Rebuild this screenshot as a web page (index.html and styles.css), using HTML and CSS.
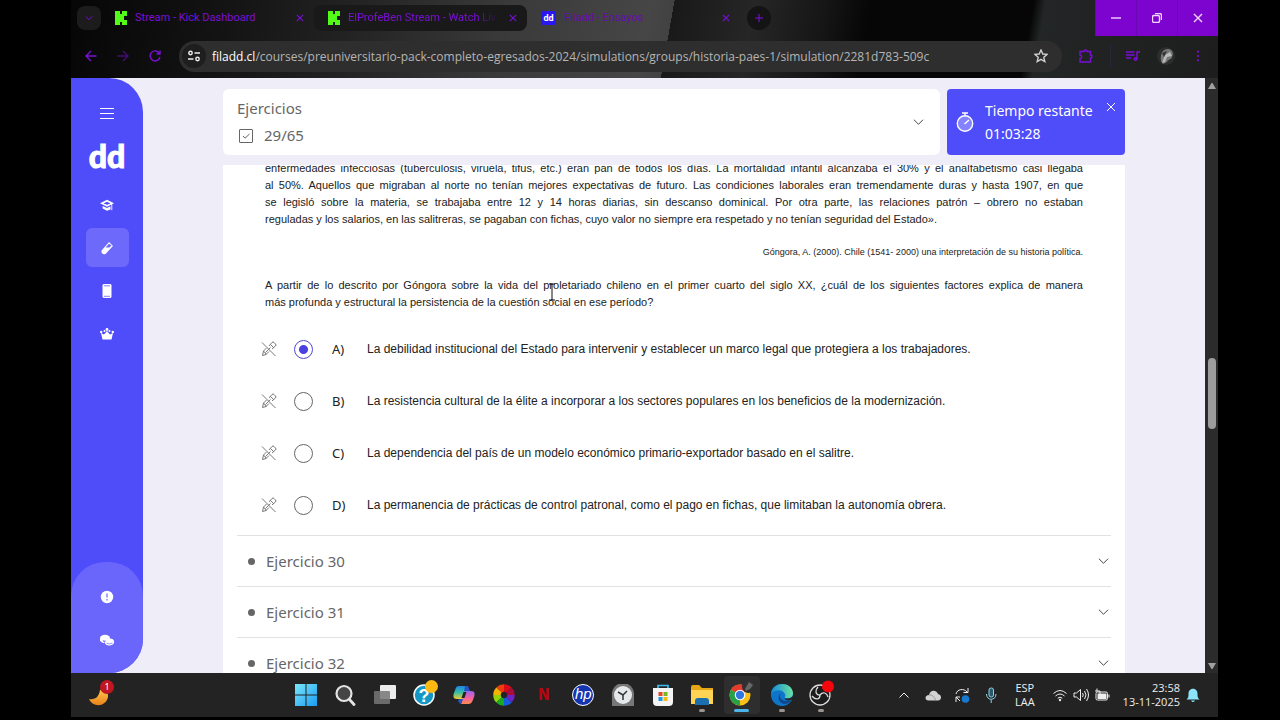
FILE: index.html
```html
<!DOCTYPE html>
<html lang="es">

<head>
    <meta charset="UTF-8">
    <meta name="viewport" content="width=device-width, initial-scale=1.0">
    <title>Filadd - Ensayos</title>
    <link rel="stylesheet" href="styles.css">
</head>

<body>
    <!-- iconos que se repiten -->
    <svg class="sprite" aria-hidden="true">
        <symbol id="i-close" viewBox="0 0 10 10"><path d="M1 1l8 8M9 1l-8 8" /></symbol>
        <symbol id="i-down" viewBox="0 0 12 8"><path d="M1 1.500l5 5 5-5" /></symbol>
        <symbol id="i-kick" viewBox="0 0 12 14">
            <g fill="#53fc18" stroke="none">
                <rect width="5" height="14" />
                <rect x="4" y="3" width="5" height="8" />
                <rect x="7" width="5" height="5" />
                <rect x="7" y="9" width="5" height="5" />
            </g>
        </symbol>
        <symbol id="i-discard" viewBox="0 0 16 16">
            <path d="M1.500 14.500l1-4.500 3-3M5 13.500l3-3M1.500 14.500l3.500-1M2.500 10l3 3.500M8 5l3-3.500q1-1 2 0l1.500 1.500q1 1 0 2L11 8M9.500 3.500l3.500 3.500M4.500 11.500l5-5M1 1.500l13.500 13.500" />
        </symbol>
    </svg>

    <div class="screen">
        <!-- ventana del navegador -->
        <header class="browser">
            <div class="tabs">
                <button class="tab-search" aria-label="Buscar pestañas"><svg class="ico"><use href="#i-down" /></svg></button>
                <div class="tab">
                    <svg class="favicon"><use href="#i-kick" /></svg>
                    <a class="tab-title" href="#">Stream - Kick Dashboard</a>
                    <button class="tab-close" aria-label="Cerrar"><svg class="ico"><use href="#i-close" /></svg></button>
                </div>
                <div class="tab tab-dark">
                    <svg class="favicon"><use href="#i-kick" /></svg>
                    <a class="tab-title fade" href="#">ElProfeBen Stream - Watch Liv</a>
                    <button class="tab-close" aria-label="Cerrar"><svg class="ico"><use href="#i-close" /></svg></button>
                </div>
                <div class="tab">
                    <span class="favicon favicon-dd">dd</span>
                    <a class="tab-title dim" href="#">Filadd - Ensayos</a>
                    <button class="tab-close" aria-label="Cerrar"><svg class="ico"><use href="#i-close" /></svg></button>
                </div>
                <button class="tab-new" aria-label="Nueva pestaña"><svg class="ico" viewBox="0 0 10 10"><path d="M5 0v10M0 5h10" /></svg></button>
                <div class="win-buttons">
                    <button aria-label="Minimizar"><svg viewBox="0 0 10 10"><path d="M0 5h10" /></svg></button>
                    <button aria-label="Restaurar"><svg viewBox="0 0 10 10"><rect x=".5" y="2.500" width="7" height="7" rx="1.500" /><path d="M3 .5h4.500q2 0 2 2V7" /></svg></button>
                    <button aria-label="Cerrar ventana"><svg><use href="#i-close" /></svg></button>
                </div>
            </div>
            <div class="toolbar">
                <button aria-label="Atrás"><svg viewBox="0 0 12 12"><path d="M11.500 6H1M6 1L1 6l5 5" /></svg></button>
                <button class="disabled" aria-label="Adelante"><svg viewBox="0 0 12 12"><path d="M.5 6H11M6 1l5 5-5 5" /></svg></button>
                <button aria-label="Recargar"><svg viewBox="0 0 12 12"><path d="M10.500 3.500a5 5 0 1 0 .5 3.500M11 .5v3.500H7.500" /></svg></button>
                <div class="address">
                    <button class="site-info" aria-label="Información del sitio">
                        <svg viewBox="0 0 12 12"><circle cx="2.500" cy="3" r="1.700" /><path d="M6.500 3H12M0 9h5.500" /><circle cx="9.500" cy="9" r="1.700" /></svg>
                    </button>
                    <span class="url"><b>filadd.cl</b>/courses/preuniversitario-pack-completo-egresados-2024/simulations/groups/historia-paes-1/simulation/2281d783-509c</span>
                    <button class="star" aria-label="Favorito"><svg viewBox="0 0 14 14"><path d="M7 1l1.800 4 4.200.4-3.200 2.900 1 4.200L7 10.300l-3.800 2.200 1-4.200L1 5.400 5.200 5z" /></svg></button>
                </div>
                <button class="ext" aria-label="Extensiones"><svg viewBox="0 0 14 14"><path d="M1 2.500h4a1.500 1.500 0 0 1 3 0h3.500V6a1.500 1.500 0 0 1 0 3v4H1V9.500a1.700 1.700 0 0 0 0-3.400z" /></svg></button>
                <button class="media" aria-label="Multimedia"><svg viewBox="0 0 14 12"><path d="M0 2h8.500M0 5h8.500M0 8h5M11 9V2h3" /><circle cx="9.500" cy="9" r="1.300" /></svg></button>
                <button aria-label="Perfil">
                    <svg class="avatar" viewBox="0 0 18 18"><circle cx="9" cy="9" r="9" fill="#2d2d2d" /><path d="M4 14C3 6 6 2 11 2c4 0 6 4 4 8-1 3-4 2-5 5l-4 2z" fill="#777" /><path d="M8 8l5-3 2 4-5 1-2 5-3 1z" fill="#bbb" /><path d="M5 6l5-2-3 6z" fill="#333" /></svg>
                </button>
                <button class="dots" aria-label="Menú"><svg viewBox="0 0 4 14"><circle cx="2" cy="2" r="1.300" /><circle cx="2" cy="7" r="1.300" /><circle cx="2" cy="12" r="1.300" /></svg></button>
            </div>
        </header>

        <!-- pagina -->
        <div class="page">
            <nav class="sidebar">
                <button class="menu" aria-label="Menú"><svg viewBox="0 0 14 12"><path d="M0 .5h14M0 5.500h14M0 10.500h14" /></svg></button>
                <a class="logo" href="#">dd</a>
                <a class="side-item" href="#" aria-label="Cursos"><svg viewBox="0 0 16 14"><path d="M0 5l8-4 8 4-8 4zM3 8l5 2.500L12 8.500V12l-4 1.500L3 11zM13 6h1v7h-1z" /><path d="M4 5.200l4-2 4 2-4 1.600z" fill="#4f4cfa" /></svg></a>
                <a class="side-item active" href="#" aria-label="Ensayos"><svg viewBox="0 0 14 14"><path d="M9 1l4 4-.8.800L6 12.500c-2.500 2.500-6-1-4-3.500L8.200 2zM9 2.800L5.500 6.500h4l2-2z" fill-rule="evenodd" /></svg></a>
                <a class="side-item" href="#" aria-label="Material"><svg viewBox="0 0 14 14"><path d="M3.500 0h7l1 1v12l-1 1h-7l-1-1V1z" /><path d="M4 1.800h6M4 12.300h6" stroke="#4f4cfa" stroke-width=".7" /></svg></a>
                <a class="side-item" href="#" aria-label="Premium"><svg viewBox="0 0 14 12"><path d="M2.500 11.500L1 5l3 1.500L7 3l3 3.500L13 5l-1.500 6.500z" /><circle cx="1.200" cy="4" r="1.200" /><circle cx="4.500" cy="3" r="1" /><circle cx="7" cy="1.500" r="1.400" /><circle cx="9.500" cy="3" r="1" /><circle cx="12.800" cy="4" r="1.200" /></svg></a>
                <div class="side-bottom">
                    <a class="side-item" href="#" aria-label="Ayuda"><svg viewBox="0 0 14 14"><circle cx="7" cy="7" r="6.200" /><path d="M7 3.500v4M7 9v1.500" stroke="#6a66fc" stroke-width="1.200" /></svg></a>
                    <a class="side-item" href="#" aria-label="Monedas"><svg viewBox="0 0 14 12"><ellipse cx="5" cy="4" rx="5" ry="3.300" /><path d="M0 4v2.500c1 2 3 2.500 5 2.500z" /><ellipse cx="9.500" cy="7.500" rx="4.500" ry="3" /><path d="M5 7.500v2c2 3 8 2.500 9-.5V7.500z" /><path d="M3 6.500q1.500.8 3 .5M6.500 9q3 2 6 0" stroke="#6a66fc" stroke-width=".7" fill="none" /></svg></a>
                </div>
            </nav>

            <main class="content">
                <div class="top">
                    <section class="progress">
                        <div>
                            <h1>Ejercicios</h1>
                            <p class="count"><svg viewBox="0 0 14 14"><rect x=".5" y=".5" width="13" height="13" rx=".5" /><path d="M4 7l2 2.200L10.500 5" /></svg>29/65</p>
                        </div>
                        <button class="toggle" aria-label="Desplegar"><svg class="chevron"><use href="#i-down" /></svg></button>
                    </section>
                    <section class="timer">
                        <svg class="clock" viewBox="0 0 18 20"><circle cx="9" cy="11.500" r="7.700" fill="#8582fd" /><path d="M6 1h6M9 1v2.500M8.500 12L13 8" /></svg>
                        <div class="timer-text">
                            <h2>Tiempo restante</h2>
                            <p>01:03:28</p>
                        </div>
                        <button class="timer-close" aria-label="Cerrar"><svg><use href="#i-close" /></svg></button>
                    </section>
                </div>

                <section class="panel">
                    <article class="exercise">
                        <p class="text">
                            <span>enfermedades infecciosas (tuberculosis, viruela, tifus, etc.) eran pan de todos los días. La mortalidad infantil alcanzaba el 30% y el analfabetismo casi llegaba</span>
                            <span>al 50%. Aquellos que migraban al norte no tenían mejores expectativas de futuro. Las condiciones laborales eran tremendamente duras y hasta 1907, en que</span>
                            <span>se legisló sobre la materia, se trabajaba entre 12 y 14 horas diarias, sin descanso dominical. Por otra parte, las relaciones patrón – obrero no estaban</span>
                            <span>reguladas y los salarios, en las salitreras, se pagaban con fichas, cuyo valor no siempre era respetado y no tenían seguridad del Estado».</span>
                        </p>
                        <p class="source">Góngora, A. (2000). Chile (1541- 2000) una interpretación de su historia política.</p>
                        <p class="text">
                            <span>A partir de lo descrito por Góngora sobre la vida del proletariado chileno en el primer cuarto del siglo XX, ¿cuál de los siguientes factores explica de manera</span>
                            <span>más profunda y estructural la persistencia de la cuestión social en ese período?</span>
                        </p>
                    </article>

                    <form class="options">
                        <div class="option">
                            <button type="button" aria-label="Descartar A"><svg><use href="#i-discard" /></svg></button>
                            <input type="radio" name="answer" id="op-a" checked>
                            <label for="op-a"><span class="letter">A)</span>La debilidad institucional del Estado para intervenir y establecer un marco legal que protegiera a los trabajadores.</label>
                        </div>
                        <div class="option">
                            <button type="button" aria-label="Descartar B"><svg><use href="#i-discard" /></svg></button>
                            <input type="radio" name="answer" id="op-b">
                            <label for="op-b"><span class="letter">B)</span>La resistencia cultural de la élite a incorporar a los sectores populares en los beneficios de la modernización.</label>
                        </div>
                        <div class="option">
                            <button type="button" aria-label="Descartar C"><svg><use href="#i-discard" /></svg></button>
                            <input type="radio" name="answer" id="op-c">
                            <label for="op-c"><span class="letter">C)</span>La dependencia del país de un modelo económico primario-exportador basado en el salitre.</label>
                        </div>
                        <div class="option">
                            <button type="button" aria-label="Descartar D"><svg><use href="#i-discard" /></svg></button>
                            <input type="radio" name="answer" id="op-d">
                            <label for="op-d"><span class="letter">D)</span>La permanencia de prácticas de control patronal, como el pago en fichas, que limitaban la autonomía obrera.</label>
                        </div>
                    </form>

                    <div class="list">
                        <button class="row">Ejercicio 30<svg class="chevron"><use href="#i-down" /></svg></button>
                        <button class="row">Ejercicio 31<svg class="chevron"><use href="#i-down" /></svg></button>
                        <button class="row">Ejercicio 32<svg class="chevron"><use href="#i-down" /></svg></button>
                    </div>
                </section>
            </main>

            <div class="scrollbar">
                <svg viewBox="0 0 10 8"><path d="M1 7l3.500-6h1L9 7z" /></svg>
                <span class="space-top"></span>
                <span class="thumb"></span>
                <span class="space-bottom"></span>
                <svg viewBox="0 0 10 8"><path d="M1 1l3.500 6h1L9 1z" /></svg>
            </div>
        </div>

        <!-- barra de tareas -->
        <footer class="taskbar">
            <button class="weather" aria-label="Clima">
                <svg viewBox="0 0 22 22"><defs><linearGradient id="g-moon" x2="0" y2="1"><stop offset="0" stop-color="#ffc34d" /><stop offset="1" stop-color="#e8821a" /></linearGradient></defs><path d="M0 15c6 1 10-2 11-9 2-1 9 1 8 7-2 10-15 11-19 2z" fill="url(#g-moon)" /></svg>
                <span class="badge">1</span>
            </button>
            <div class="apps">
                <button aria-label="Inicio"><svg viewBox="0 0 22 22"><defs><linearGradient id="g-win" x2="1" y2="1"><stop offset="0" stop-color="#7be6fb" /><stop offset="1" stop-color="#1a9cf0" /></linearGradient></defs><path d="M0 0h10.500v10.500H0zM11.500 0H22v10.500H11.500zM0 11.500h10.500V22H0zM11.500 11.500H22V22H11.500z" fill="url(#g-win)" /></svg></button>
                <button aria-label="Buscar"><svg viewBox="0 0 22 22"><circle cx="10" cy="9.500" r="7.500" fill="#454545" stroke="#e4e4e4" stroke-width="2.200" /><path d="M15.500 15.500l4.500 5" stroke="#e4e4e4" stroke-width="2.800" stroke-linecap="round" /></svg></button>
                <button aria-label="Vista de tareas"><svg viewBox="0 0 22 22"><rect x="6" y="1" width="16" height="14" rx="1" fill="#ececec" /><rect y="7" width="16" height="13" rx="1" fill="#777" fill-opacity=".85" /></svg></button>
                <button aria-label="Ayuda"><svg class="big" viewBox="0 0 26 26"><circle cx="12" cy="15" r="10" fill="#1597c5" stroke="#fff" stroke-width="1.500" /><text x="12" y="21.500" class="q">?</text><circle cx="19.500" cy="6.500" r="6.500" fill="#fbb911" /></svg></button>
                <button aria-label="Copilot"><svg viewBox="0 0 22 22"><defs><linearGradient id="g-cop1" x2="0" y2="1"><stop offset="0" stop-color="#1c86e8" /><stop offset=".5" stop-color="#37bfa4" /><stop offset="1" stop-color="#f0cd30" /></linearGradient><linearGradient id="g-cop2" x2="0" y2="1"><stop offset="0" stop-color="#9367ee" /><stop offset=".5" stop-color="#f15faa" /><stop offset="1" stop-color="#ff8a4a" /></linearGradient></defs><path d="M6 2h8l-4 13H4c-4 0-4-3-3-6l1.500-4C3 3 4 2 6 2z" fill="url(#g-cop1)" /><path d="M12 7h6c4 0 4 3 3 6l-1.500 4c-1 2-2 3-4 3H8z" fill="url(#g-cop2)" /><path d="M12 2h3l2 5h-6zM6 15h4l-2 5q-2 0-3-3z" fill="#2453c7" /><path d="M10.500 8h3l-2 6h-3z" fill="#242424" /></svg></button>
                <button aria-label="Colores"><svg viewBox="0 0 22 22"><g stroke-width="7.500" fill="none"><path d="M11 4a7 7 0 0 1 5 2" stroke="#d80c18" /><path d="M6 6a7 7 0 0 1 5-2" stroke="#ee3d0d" /><path d="M4 11a7 7 0 0 1 2-5" stroke="#f5b400" /><path d="M6 16a7 7 0 0 1-2-5" stroke="#93d50b" /><path d="M11 18a7 7 0 0 1-5-2" stroke="#19ab22" /><path d="M16 16a7 7 0 0 1-5 2" stroke="#165de0" /><path d="M18 11a7 7 0 0 1-2 5" stroke="#7022c4" /><path d="M16 6a7 7 0 0 1 2 5" stroke="#ad0b3e" /></g></svg></button>
                <button aria-label="Netflix"><span class="netflix">N</span></button>
                <button aria-label="HP"><span class="hp">hp</span></button>
                <button aria-label="Reloj"><svg viewBox="0 0 22 22"><path d="M0 22V10a11 11 0 0 1 22 0v12z" fill="#777" /><circle cx="11" cy="11" r="9" fill="#e6e9eb" /><path d="M6 8l5 3 4-4M11 11v5" stroke="#333" stroke-width="1.500" fill="none" /></svg></button>
                <button aria-label="Tienda"><svg viewBox="0 0 22 22"><path d="M6 5V1.500h10V5" stroke="#38bdea" stroke-width="1.700" fill="none" /><path d="M1 4h20v14q0 4-4 4H5q-4 0-4-4z" fill="#f4f4f4" /><path d="M6.500 8h4v4h-4z" fill="#e8452c" /><path d="M11.500 8h4v4h-4z" fill="#7bb71b" /><path d="M6.500 13h4v4h-4z" fill="#1c9ce4" /><path d="M11.500 13h4v4h-4z" fill="#fbb911" /></svg></button>
                <button class="open" aria-label="Archivos"><svg viewBox="0 0 22 22"><path d="M0 3q0-2 2-2h6l3 3h11v16H0z" fill="#e5a814" /><path d="M0 6h22v14H0z" fill="#ffd454" /><path d="M4 21v-4q0-3 3-3h8q3 0 3 3v4z" fill="#1b6fae" /></svg></button>
                <button class="open current" aria-label="Chrome"><svg class="big" viewBox="0 0 26 26"><circle cx="11" cy="15" r="10.500" fill="#fbc116" /><path d="M11 15L1.900 9.800a10.500 10.500 0 0 1 18.200 0z" fill="#e33b2e" /><path d="M11 15l0 10.500A10.500 10.500 0 0 1 1.900 9.800z" fill="#27a04a" /><circle cx="11" cy="15" r="5.300" fill="#fff" /><circle cx="11" cy="15" r="4.200" fill="#2f78e4" /><circle cx="19.500" cy="6.500" r="6.500" fill="#303030" /><path d="M16 9l4-7 4 3-3 4-4 2z" fill="#666" /></svg></button>
                <button class="open" aria-label="Edge"><svg viewBox="0 0 22 22"><defs><linearGradient id="g-edge" x2="1"><stop offset="0" stop-color="#1587d9" /><stop offset="1" stop-color="#6be2a0" /></linearGradient></defs><circle cx="11" cy="11" r="11" fill="#0e75c9" /><path d="M0 10C1-3 21-3 22 9c0 5-5 6-8 5-1-1 1-2 0-4C11 4 3 6 0 10z" fill="url(#g-edge)" /><path d="M10 9c-4 3-3 10 3 11 3 0 6-1 7-4-4 2-10 1-11-3 0-2 0-3 1-4z" fill="#12468f" /><path d="M13.500 14c2 1 6 1 8.500-2v3c-3 2-8 2-8.500-1z" fill="#242424" /></svg></button>
                <button class="open" aria-label="OBS"><svg class="big" viewBox="0 0 26 26"><g fill="none" stroke="#ddd" stroke-width="1.300"><circle cx="12" cy="15" r="10" fill="#1c1c1c" /><path d="M12 15c-5 0-5-5-2-8M12 15c3-4 7-2 8 2M12 15c0 5-5 5-8 1" /></g><circle cx="20" cy="6.500" r="6" fill="#f5050c" /></svg></button>
            </div>
            <div class="tray">
                <button aria-label="Iconos ocultos"><svg viewBox="0 0 16 16"><path d="M3.500 10.500L8 6l4.500 4.500" /></svg></button>
                <button aria-label="OneDrive"><svg viewBox="0 0 16 16"><path d="M3.500 13.500C-1 13 0 8 4 8c1-5 7-6 9-1 4 1 4 6 0 6.500z" fill="#d2d2d2" stroke="none" /><path d="M4 8q4-1 7 5.500" stroke="#999" /></svg></button>
                <button aria-label="Sincronizar"><svg viewBox="0 0 16 16"><path d="M2 7c1-5 8-6 11-2M14 1v4.500H9.500M6 14L2 10M2 15v-5h4" /><circle cx="11.500" cy="12" r="3.800" fill="#1479cf" stroke="none" /></svg></button>
                <button aria-label="Micrófono"><svg viewBox="0 0 16 16"><rect x="6" y="1" width="4.500" height="9" rx="2" stroke="#8fd3ea" fill="#25596b" /><path d="M3.500 7c0 7 9.500 7 9.500 0M8.200 12.500V16" stroke="#8fd3ea" /></svg></button>
                <button class="lang">ESP<br>LAA</button>
                <button class="net" aria-label="Red, sonido y batería">
                    <svg viewBox="0 0 16 16"><path d="M1.500 6.500q6.500-6 13 0M3.500 9q4.500-4 9 0M5.700 11.200q2.300-2 4.600 0" /><circle cx="8" cy="13" r="1.200" fill="#eee" stroke="none" /></svg>
                    <svg viewBox="0 0 16 16"><path d="M1 6v4h2.500L7.500 13.500v-11L3.500 6zM9.500 6q1.500 2 0 4M11.500 4q3 4 0 8M13.500 2q4 6 0 12" /></svg>
                    <svg viewBox="0 0 16 16"><rect x="2" y="5" width="11.500" height="8" rx="1.500" /><rect x="4" y="7" width="8" height="4.500" fill="#eee" /><path d="M15 7.500v3M3 1.500v3M1 4h5v3l-2 2" /></svg>
                </button>
                <button class="date">23:58<br>13-11-2025</button>
                <button aria-label="Notificaciones"><svg viewBox="0 0 16 16"><path d="M1.500 12.500c2-2 2-3 2-6C3.500 0 12.500 0 12.500 6.500c0 3 0 4 2 6z" fill="#8be4fb" stroke="none" /><path d="M6 13.500q2 3 4 0z" fill="#8be4fb" stroke="none" /></svg></button>
            </div>
        </footer>
    </div>

    <!-- puntero de texto -->
    <svg class="cursor" viewBox="0 0 8 18"><path d="M1 1h2.500l.5 1 .5-1H7M4 2v14M1 17h2.500l.5-1 .5 1H7" /></svg>
</body>

</html>
```
FILE: styles.css
```css
* {
    margin: 0;
    padding: 0;
    box-sizing: border-box;
}

body {
    background-color: #000;
    font-family: "Noto Sans", sans-serif;
}

button {
    border: none;
    background: none;
    color: inherit;
    font: inherit;
}

a {
    color: inherit;
    text-decoration: none;
}

svg {
    display: block;
    flex: none;
}

.sprite {
    position: absolute;
    width: 0;
    height: 0;
}

.screen {
    display: flex;
    flex-direction: column;
    height: 100vh;
    padding: 0 62px 3px 71px;
    overflow: hidden;
}

/* navegador */

.browser {
    flex: none;
    color: #7a0fd6;
    background: linear-gradient(100deg, #060606 0, #141414 14%, #222 24%, #3a3a3a 38%, #464646 50%, #424242 52%, #191919 52%, #262626 59%, #161616 65%, #060606 69%, #060606 83%, #232626 84%, #1d1d1d 100%);
}

.browser svg {
    fill: none;
    stroke: currentColor;
    stroke-width: 1.4;
}

.tabs {
    display: flex;
    align-items: center;
    height: 36px;
    padding-left: 6px;
    font: 11px Roboto, sans-serif;
}

.tab-search,
.tab-new {
    display: flex;
    align-items: center;
    justify-content: center;
    width: 24px;
    height: 24px;
    border-radius: 8px;
    background-color: #1c1c1c;
}

.tab-new {
    margin-left: 7px;
    border-radius: 50%;
    background-color: #141414;
}

.browser .ico {
    width: 8px;
    height: 8px;
}

.tab {
    display: flex;
    align-items: center;
    gap: 8px;
    width: 213px;
    height: 26px;
    padding: 0 8px 0 14px;
    border-radius: 8px;
}

.tab-dark {
    background-color: #191919;
}

.favicon {
    flex: none;
    width: 12px;
    height: 14px;
}

.favicon-dd {
    width: 15px;
    border-radius: 2px;
    background-color: #2a17f0;
    color: #fff;
    font: bold 9px/14px Roboto, sans-serif;
    text-align: center;
}

.tab-title {
    flex: 1;
    overflow: hidden;
    line-height: 16px;
    white-space: nowrap;
}

.fade {
    -webkit-mask-image: linear-gradient(90deg, #000 85%, transparent);
    mask-image: linear-gradient(90deg, #000 85%, transparent);
}

.dim {
    color: #650cb0;
}

.tab-close {
    padding: 2px;
}

.win-buttons {
    display: flex;
    align-self: stretch;
    margin-left: auto;
    background-color: #7d04cf;
    color: #f5d5ff;
}

.win-buttons button {
    display: flex;
    align-items: center;
    justify-content: center;
    width: 41px;
    border-left: 1px solid #6a06b4;
}

.win-buttons svg {
    width: 10px;
    height: 10px;
}

.toolbar {
    display: flex;
    align-items: center;
    height: 42px;
    padding: 0 8px 2px 4px;
}

.toolbar button {
    display: flex;
    align-items: center;
    justify-content: center;
    width: 32px;
    height: 24px;
}

.toolbar svg {
    width: 12px;
    height: 12px;
}

.toolbar .disabled {
    opacity: 0.5;
}

.address {
    display: flex;
    flex: 1;
    align-items: center;
    height: 31px;
    margin: 0 8px;
    border-radius: 16px;
    background-color: #2e2e2e;
    color: #b5b5b5;
}

.toolbar .site-info {
    width: 24px;
    margin: 0 6px 0 3px;
    border-radius: 50%;
    background-color: #1e1e1e;
    color: #eee;
}

.url {
    flex: 1;
    overflow: hidden;
    white-space: nowrap;
    font: 12px "Open Sans", sans-serif;
}

.url b {
    color: #fff;
    font-weight: 500;
}

.toolbar .star {
    width: 42px;
    color: #d0d0d0;
}

.star svg,
.ext svg,
.media svg {
    width: 14px;
    height: 14px;
}

.toolbar .media {
    width: 40px;
    margin-left: 8px;
    padding-left: 4px;
    border-left: 1px solid #2a2438;
}

.toolbar .avatar {
    width: 18px;
    height: 18px;
    stroke: none;
}

.toolbar .dots {
    width: 24px;
    margin-left: 4px;
}

.dots svg {
    fill: currentColor;
    stroke: none;
}

/* pagina */

.page {
    display: flex;
    flex: 1;
    min-height: 0;
    background-color: #efedf8;
}

.sidebar {
    display: flex;
    flex: none;
    flex-direction: column;
    align-items: center;
    width: 72px;
    border-radius: 0 34px 34px 0;
    background-color: #4f4cfa;
    color: #fff;
    overflow: hidden;
}

.menu {
    margin-top: 30px;
}

.menu svg {
    width: 14px;
    height: 12px;
    stroke: #fff;
}

.logo {
    margin: 20px 0 13px;
    font: 900 32px/32px Lato, sans-serif;
    -webkit-text-stroke: 1px #fff;
}

.side-item {
    display: flex;
    align-items: center;
    justify-content: center;
    width: 43px;
    height: 39px;
    margin-bottom: 4px;
    border-radius: 6px;
}

.side-item svg {
    width: 14px;
    height: 14px;
    fill: #fff;
}

.active {
    background-color: #6c69fb;
}

.side-bottom {
    display: flex;
    flex-direction: column;
    align-items: center;
    width: 100%;
    margin-top: auto;
    padding: 15px 0 10px;
    border-radius: 34px 34px 0 0;
    background-color: #6a66fc;
}

.content {
    display: flex;
    flex: 1;
    flex-direction: column;
    gap: 10px;
    min-width: 0;
    padding: 11px 80px 0;
}

.top {
    display: flex;
    gap: 7px;
    height: 66px;
    flex: none;
}

.progress {
    display: flex;
    flex: 1;
    align-items: center;
    justify-content: space-between;
    padding: 0 16px 0 14px;
    border-radius: 6px;
    background-color: #fff;
    color: #666;
}

.progress h1,
.count {
    font-size: 15px;
    font-weight: 400;
    line-height: 27px;
}

.count {
    display: flex;
    align-items: center;
    gap: 11px;
    padding-left: 2px;
}

.count svg {
    width: 14px;
    height: 14px;
    fill: none;
    stroke: #666;
}

.chevron {
    width: 11px;
    height: 8px;
    fill: none;
    stroke: #333;
}

.timer {
    display: flex;
    flex: none;
    align-items: center;
    gap: 11px;
    width: 178px;
    padding: 0 9px;
    border-radius: 4px;
    background-color: #4f4cfa;
    color: #fff;
}

.timer svg {
    fill: none;
    stroke: #fff;
}

.timer .clock {
    width: 18px;
    height: 20px;
    stroke-width: 1.4;
}

.timer-text {
    flex: 1;
    white-space: nowrap;
}

.timer h2,
.timer p {
    font-size: 14px;
    font-weight: 400;
    line-height: 23px;
}

.timer-close {
    align-self: flex-start;
    margin-top: 13px;
}

.timer-close svg {
    width: 10px;
    height: 10px;
}

.panel {
    flex: 1;
    min-height: 0;
    background-color: #fff;
    overflow: hidden;
}

/* el enunciado queda desplazado bajo la cabecera */

.exercise {
    margin-top: -5px;
    padding: 0 42px;
    color: #222;
    font: 11px/17px "Liberation Sans", Arial, sans-serif;
}

.text span {
    display: block;
    text-align: justify;
    text-align-last: justify;
}

.text span:last-child {
    text-align-last: left;
}

.source {
    margin: 16px 0;
    font-size: 9px;
    text-align: right;
}

.options {
    padding: 12px 38px 4px;
}

.option {
    display: flex;
    align-items: center;
    height: 52px;
}

.option svg {
    width: 16px;
    height: 16px;
    fill: none;
    stroke: #777;
}

.option input {
    appearance: none;
    width: 19px;
    height: 19px;
    margin: 0 19px 0 17px;
    border: 1px solid #666;
    border-radius: 50%;
}

.option input:checked {
    border-color: #4f46d8;
    background: radial-gradient(circle, #4840e0 4px, transparent 5px);
}

.option label {
    display: flex;
    align-items: center;
    color: #222;
    font: 12px/17px "Liberation Sans", Arial, sans-serif;
}

.letter {
    width: 35px;
    font: 13px/17px "Noto Sans", sans-serif;
}

.list {
    padding: 0 14px;
}

.row {
    display: flex;
    align-items: center;
    width: 100%;
    height: 51px;
    padding: 0 2px 0 11px;
    border-top: 1px solid #e2e2e2;
    color: #666;
    font-size: 15px;
}

.row::before {
    content: "";
    width: 7px;
    height: 7px;
    margin-right: 11px;
    border-radius: 50%;
    background-color: #666;
}

.row .chevron {
    margin-left: auto;
}

.scrollbar {
    display: flex;
    flex: none;
    flex-direction: column;
    align-items: center;
    width: 13px;
    padding: 4px 0 3px;
    background-color: #2b2b2b;
}

.scrollbar svg {
    width: 10px;
    height: 8px;
    fill: #a0a0a0;
}

.thumb {
    width: 8px;
    height: 12%;
    border-radius: 4px;
    background-color: #9c9c9c;
}

.space-top {
    flex: 268;
}

.space-bottom {
    flex: 233;
}

/* barra de tareas */

.taskbar {
    display: grid;
    flex: none;
    grid-template-columns: 215px 555px 1fr;
    height: 44px;
    background-color: #232323;
    color: #eee;
}

.weather {
    position: relative;
    width: 26px;
    margin-left: 18px;
}

.weather svg {
    width: 22px;
    height: 22px;
}

.badge {
    position: absolute;
    top: 7px;
    right: 1px;
    width: 14px;
    height: 14px;
    border-radius: 50%;
    background-color: #c01722;
    color: #fff;
    font-size: 9px;
    line-height: 14px;
}

.apps {
    display: grid;
    grid-template-columns: repeat(14, 1fr);
}

.apps button {
    display: flex;
    position: relative;
    align-items: center;
    justify-content: center;
}

.apps svg {
    width: 22px;
    height: 22px;
}

.apps .big {
    width: 26px;
    height: 26px;
    margin-bottom: 4px;
}

.q {
    fill: #fff;
    font: bold 18px "Liberation Sans", sans-serif;
    text-anchor: middle;
}

.netflix {
    color: #b80610;
    font: bold 16px/22px "DejaVu Sans Condensed", sans-serif;
}

.hp {
    width: 22px;
    height: 22px;
    border: 1px solid #fff;
    border-radius: 50%;
    background-color: #1535b0;
    color: #fff;
    font: italic 15px/17px "Liberation Sans", sans-serif;
}

.open::after {
    content: "";
    position: absolute;
    bottom: 5px;
    width: 6px;
    height: 3px;
    border-radius: 2px;
    background-color: #9b9490;
}

.current {
    margin: 3px 2px;
    border-radius: 4px;
    background-color: #2e2e2e;
}

.current::after {
    bottom: 2px;
    width: 15px;
    background-color: #4ab5e8;
}

.tray {
    display: flex;
    align-items: center;
    justify-content: flex-end;
    gap: 13px;
    padding-right: 17px;
    font: 11px/14px "Open Sans", sans-serif;
}

.tray svg {
    width: 16px;
    height: 16px;
    fill: none;
    stroke: #eee;
}

.lang {
    margin-left: 3px;
}

.net {
    display: flex;
    gap: 5px;
    margin-left: 4px;
}

.date {
    margin-right: -8px;
    text-align: right;
}

.cursor {
    position: absolute;
    top: 283px;
    left: 548px;
    width: 8px;
    height: 18px;
    fill: none;
    stroke: #111;
}
```
